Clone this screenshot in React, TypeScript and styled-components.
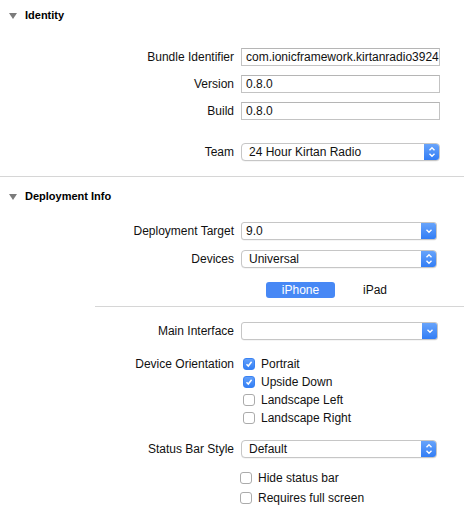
import React from "react";
import styled, { createGlobalStyle } from "styled-components";

const Global = createGlobalStyle`
  html, body { margin: 0; padding: 0; background: #ffffff; }
  body { font-family: "Liberation Sans", Arial, sans-serif; color: #1a1a1a; }
`;

const Page = styled.div`
  width: 464px;
  height: 512px;
  overflow: hidden;
  background: #fff;
  display: flex;
  flex-direction: column;
`;

const SectionHeader = styled.div<{ $mt: number }>`
  display: flex;
  align-items: center;
  gap: 8px;
  height: 18px;
  margin-top: ${(p) => p.$mt}px;
  padding-left: 9px;
  font-size: 11px;
  font-weight: bold;
  color: #000;
`;

const Triangle = styled.span`
  width: 0;
  height: 0;
  border-left: 4px solid transparent;
  border-right: 4px solid transparent;
  border-top: 6px solid #7b7b7b;
  margin-top: 1px;
`;

const Separator = styled.div<{ $mt: number; $indent: number }>`
  height: 1px;
  background: #d6d6d6;
  margin-top: ${(p) => p.$mt}px;
  margin-left: ${(p) => p.$indent}px;
`;

const Row = styled.div<{ $mt: number }>`
  display: flex;
  align-items: flex-start;
  margin-top: ${(p) => p.$mt}px;
`;

const Label = styled.div`
  width: 234px;
  flex: none;
  margin-right: 7px;
  text-align: right;
  font-size: 12px;
  line-height: 18px;
  height: 18px;
  color: #111;
`;

const TextField = styled.div`
  width: 199px;
  height: 18px;
  box-sizing: border-box;
  border: 1px solid #c3c3c3;
  border-top-color: #b5b5b5;
  padding-left: 4px;
  font-size: 12px;
  line-height: 16px;
  white-space: nowrap;
  overflow: hidden;
  background: #fff;
  color: #111;
`;

const Popup = styled.div<{ $w: number; $round: boolean }>`
  width: ${(p) => p.$w}px;
  height: 18px;
  box-sizing: border-box;
  border: 1px solid #c6c6c6;
  border-radius: ${(p) => (p.$round ? "4px" : "3px")};
  display: flex;
  overflow: hidden;
  background: #fff;
  box-shadow: 0 0.5px 0.5px rgba(0, 0, 0, 0.08);
`;

const PopupText = styled.div<{ $pad: number }>`
  flex: 1;
  padding-left: ${(p) => p.$pad}px;
  font-size: 12px;
  line-height: 16px;
  color: #111;
  white-space: nowrap;
  overflow: hidden;
`;

const PopupArrow = styled.div`
  width: 16px;
  flex: none;
  margin: -1px -1px -1px 0;
  border-radius: 0 4px 4px 0;
  background: linear-gradient(#6ba6fb, #2f7bf5);
  display: flex;
  align-items: center;
  justify-content: center;
`;

const Segments = styled.div`
  display: flex;
  margin-left: 266px;
  height: 16px;
`;

const Segment = styled.div<{ $on: boolean; $w: number }>`
  width: ${(p) => p.$w}px;
  height: 16px;
  border-radius: 3px;
  background: ${(p) => (p.$on ? "#4788f5" : "transparent")};
  color: ${(p) => (p.$on ? "#fff" : "#111")};
  font-size: 12px;
  line-height: 16px;
  text-align: center;
`;

const CheckList = styled.div<{ $gap: number; $shift: number }>`
  display: flex;
  flex-direction: column;
  margin-left: ${(p) => p.$shift}px;
  & > * + * {
    margin-top: ${(p) => p.$gap}px;
  }
`;

const CheckRow = styled.div`
  display: flex;
  align-items: center;
  gap: 6px;
  height: 18px;
  font-size: 12px;
  color: #111;
`;

const Box = styled.span<{ $on: boolean }>`
  width: 12px;
  height: 12px;
  box-sizing: border-box;
  border-radius: 3px;
  border: 1px solid ${(p) => (p.$on ? "#3a82f2" : "#ababab")};
  background: ${(p) => (p.$on ? "linear-gradient(#62a0fb, #337ff5)" : "#fff")};
  display: flex;
  align-items: center;
  justify-content: center;
`;

const Spacer = styled.div`
  width: 240px;
  flex: none;
`;

const Chevrons = ({ single }: { single?: boolean }) =>
  single ? (
    <svg width="8" height="6" viewBox="0 0 8 6">
      <path d="M1.5 1.8 L4 4.2 L6.5 1.8" fill="none" stroke="#fff" strokeWidth="1.4" />
    </svg>
  ) : (
    <svg width="8" height="12" viewBox="0 0 8 12">
      <path d="M1.5 4.3 L4 1.8 L6.5 4.3" fill="none" stroke="#fff" strokeWidth="1.4" />
      <path d="M1.5 7.7 L4 10.2 L6.5 7.7" fill="none" stroke="#fff" strokeWidth="1.4" />
    </svg>
  );

const Check = ({ on, text }: { on: boolean; text: string }) => (
  <CheckRow>
    <Box $on={on}>
      {on && (
        <svg width="8" height="8" viewBox="0 0 8 8">
          <path d="M1.5 4.2 L3.3 6 L6.6 1.8" fill="none" stroke="#fff" strokeWidth="1.5" />
        </svg>
      )}
    </Box>
    {text}
  </CheckRow>
);

const PopupField = ({
  text,
  w,
  single,
  pad,
}: {
  text: string;
  w: number;
  single?: boolean;
  pad: number;
}) => (
  <Popup $w={w} $round={!single}>
    <PopupText $pad={pad}>{text}</PopupText>
    <PopupArrow>
      <Chevrons single={single} />
    </PopupArrow>
  </Popup>
);

export default function App() {
  return (
    <Page>
      <Global />
      <SectionHeader $mt={6}>
        <Triangle />
        Identity
      </SectionHeader>
      <Row $mt={24}>
        <Label>Bundle Identifier</Label>
        <TextField>com.ionicframework.kirtanradio392451</TextField>
      </Row>
      <Row $mt={9}>
        <Label>Version</Label>
        <TextField>0.8.0</TextField>
      </Row>
      <Row $mt={9}>
        <Label>Build</Label>
        <TextField>0.8.0</TextField>
      </Row>
      <Row $mt={23}>
        <Label>Team</Label>
        <PopupField text="24 Hour Kirtan Radio" w={199} pad={7} />
      </Row>
      <Separator $mt={15} $indent={0} />
      <SectionHeader $mt={10}>
        <Triangle />
        Deployment Info
      </SectionHeader>
      <Row $mt={17}>
        <Label>Deployment Target</Label>
        <PopupField text="9.0" w={196} single pad={4} />
      </Row>
      <Row $mt={10}>
        <Label>Devices</Label>
        <PopupField text="Universal" w={196} pad={7} />
      </Row>
      <Row $mt={14}>
        <Segments>
          <Segment $on $w={69}>iPhone</Segment>
          <Segment $on={false} $w={80}>iPad</Segment>
        </Segments>
      </Row>
      <Separator $mt={8} $indent={95} />
      <Row $mt={15}>
        <Label>Main Interface</Label>
        <PopupField text="" w={197} single pad={4} />
      </Row>
      <Row $mt={15}>
        <Label>Device Orientation</Label>
        <CheckList $gap={0} $shift={2}>
          <Check on text="Portrait" />
          <Check on text="Upside Down" />
          <Check on={false} text="Landscape Left" />
          <Check on={false} text="Landscape Right" />
        </CheckList>
      </Row>
      <Row $mt={13}>
        <Label>Status Bar Style</Label>
        <PopupField text="Default" w={196} pad={7} />
      </Row>
      <Row $mt={11}>
        <Spacer />
        <CheckList $gap={2} $shift={0}>
          <Check on={false} text="Hide status bar" />
          <Check on={false} text="Requires full screen" />
        </CheckList>
      </Row>
    </Page>
  );
}
